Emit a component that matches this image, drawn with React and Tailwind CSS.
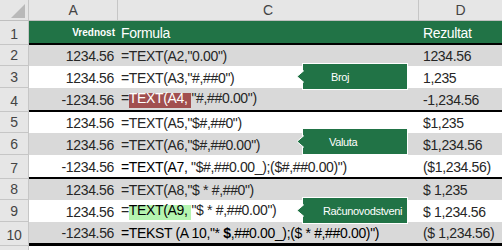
import React from "react";

const G = "bg-[#d9d9d9]";
const W = "bg-white";

function Arrow() {
  return (
    <svg
      className="absolute left-[-7px] top-[6px]"
      width="8"
      height="13"
      viewBox="0 0 8 13"
    >
      <polygon points="8,0.5 1,6.5 8,12.5" fill="#217346" />
      <polyline points="8,0.5 1,6.5 8,12.5" fill="none" stroke="#ffffff" strokeWidth="1" />
    </svg>
  );
}

function Callout({ top, pl, children }) {
  return (
    <div
      className={`absolute left-[302px] ${top} w-[106px] h-[27px] bg-[#217346] border border-white`}
    >
      <Arrow />
      <div
        className={`h-full w-full overflow-hidden whitespace-nowrap flex items-center ${pl} text-white text-[11px] leading-[14px]`}
      >
        {children}
      </div>
    </div>
  );
}

function RowHead({ n }) {
  return (
    <div className="w-[29px] shrink-0 bg-[#e6e6e6] border-r border-b border-[#c6c6c6] flex items-end justify-center text-[#444] text-[14px] leading-[16px] pb-[2px]">
      {n}
    </div>
  );
}

function Row({ n, h, bg, line, a, c, d }) {
  return (
    <div className="flex">
      <RowHead n={n} />
      <div className={`flex flex-1 ${bg} ${h} ${line}`}>
        <div className="w-[89px] shrink-0 flex items-end justify-end pr-[4px] pb-[2px] leading-[16px] whitespace-nowrap">
          {a}
        </div>
        <div className="w-[301px] shrink-0 flex items-end pl-[3px] pb-[2px] leading-[16px] whitespace-nowrap">
          <span>{c}</span>
        </div>
        <div className="flex-1 flex items-end pl-[4px] pb-[2px] leading-[16px] whitespace-nowrap">
          {d}
        </div>
      </div>
    </div>
  );
}

const rows = [
  { n: 2, h: "h-[21px]", bg: G, line: "", a: "1234.56", c: '=TEXT(A2,"0.00")', d: "1234.56" },
  { n: 3, h: "h-[22px]", bg: W, line: "", a: "1234.56", c: '=TEXT(A3,"#,##0")', d: "1,235" },
  {
    n: 4,
    h: "h-[24px]",
    bg: G,
    line: "border-b-2 border-black",
    a: "-1234.56",
    c: (
      <>
        =
        <span className="inline-block h-[15px] leading-[10px] bg-[#a14f4f] text-white pr-[4px]">
          TEXT(A4,
        </span>
        {'"#,##0.00")'}
      </>
    ),
    d: "-1,234.56",
  },
  { n: 5, h: "h-[21px]", bg: W, line: "", a: "1234.56", c: '=TEXT(A5,"$#,##0")', d: "$1,235" },
  { n: 6, h: "h-[22px]", bg: G, line: "", a: "1234.56", c: '=TEXT(A6,"$#,##0.00")', d: "$1,234.56" },
  {
    n: 7,
    h: "h-[24px]",
    bg: W,
    line: "border-b-2 border-black",
    a: "-1234.56",
    c: (
      <>
        <span className="text-black">=TEXT(A7,</span> {'"$#,##0.00_);($#,##0.00)")'}
      </>
    ),
    d: "($1,234.56)",
  },
  { n: 8, h: "h-[21px]", bg: G, line: "", a: "1234.56", c: '=TEXT(A8,"$ * #,##0")', d: "$ 1,235" },
  {
    n: 9,
    h: "h-[22px]",
    bg: W,
    line: "",
    a: "1234.56",
    c: (
      <>
        =
        <span className="inline-block h-[15px] leading-[10px] bg-[#b5f5b0] text-black pr-[4px]">
          TEXT(A9,
        </span>
        {'"$ * #,##0.00")'}
      </>
    ),
    d: "$ 1,234.56",
  },
  {
    n: 10,
    h: "h-[24px]",
    bg: G,
    line: "border-b-[3px] border-black",
    a: "-1234.56",
    c: (
      <span className="text-black">
        {'=TEKST (A 10,"* '}
        <b>$</b>
        {',##0.00_);($ * #,##0.00)")'}
      </span>
    ),
    d: "($ 1,234.56)",
  },
];

export default function App() {
  return (
    <div className="relative w-[502px] h-[250px] overflow-hidden bg-white font-['Liberation_Sans',Arial,sans-serif] text-[14px] tracking-[-0.35px] text-[#262626]">
      {/* column headers */}
      <div className="flex h-[21px] bg-[#e6e6e6] border-b border-[#bfbfbf] text-[#444]">
        <div className="relative w-[29px] shrink-0 border-r border-[#c6c6c6]">
          <svg className="absolute left-[11px] top-[4px]" width="14" height="14" viewBox="0 0 14 14">
            <polygon points="14,0 14,14 0,14" fill="#b9b9b9" />
          </svg>
        </div>
        <div className="w-[89px] shrink-0 border-r border-[#c6c6c6] flex items-center justify-center">A</div>
        <div className="w-[301px] shrink-0 border-r border-[#c6c6c6] flex items-center justify-center">C</div>
        <div className="flex-1 flex items-center justify-center">D</div>
      </div>

      {/* row 1 header */}
      <div className="flex">
        <RowHead n={1} />
        <div className="flex flex-1 h-[24px] bg-[#217346] border-b-2 border-black text-white">
          <div className="w-[89px] shrink-0 flex items-end justify-end pr-[3px] pb-[3px] text-[10px] font-bold leading-[14px] tracking-normal">
            Vrednost
          </div>
          <div className="w-[301px] shrink-0 flex items-end pl-[3px] pb-[2px] leading-[16px]">Formula</div>
          <div className="flex-1 flex items-end pl-[4px] pb-[2px] leading-[16px]">Rezultat</div>
        </div>
      </div>

      {rows.map((r) => (
        <Row key={r.n} {...r} />
      ))}

      {/* row 11 partial */}
      <div className="flex h-[10px]">
        <div className="w-[29px] shrink-0 bg-[#e6e6e6] border-r border-[#c6c6c6]" />
        <div className="flex-1 bg-white" />
      </div>

      <Callout top="top-[63px]" pl="pl-[28px]">Broj</Callout>
      <Callout top="top-[128px]" pl="pl-[26px]">Valuta</Callout>
      <Callout top="top-[197px]" pl="pl-[20px]">Računovodstveni</Callout>
    </div>
  );
}
